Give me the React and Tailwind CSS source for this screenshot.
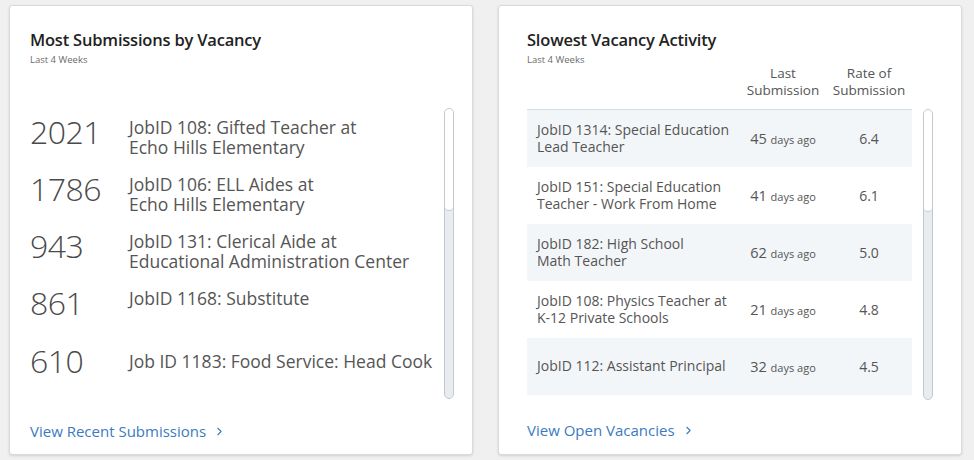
import { ChevronRight } from 'lucide-react'

const submissions = [
  { count: '2021', lines: ['JobID 108: Gifted Teacher at', 'Echo Hills Elementary'] },
  { count: '1786', lines: ['JobID 106: ELL Aides at', 'Echo Hills Elementary'] },
  { count: '943', lines: ['JobID 131: Clerical Aide at', 'Educational Administration Center'] },
  { count: '861', lines: ['JobID 1168: Substitute'] },
  { count: '610', lines: ['Job ID 1183: Food Service: Head Cook'], center: true },
]

const slowest = [
  { lines: ['JobID 1314: Special Education', 'Lead Teacher'], days: '45', rate: '6.4' },
  { lines: ['JobID 151: Special Education', 'Teacher - Work From Home'], days: '41', rate: '6.1' },
  { lines: ['JobID 182: High School', 'Math Teacher'], days: '62', rate: '5.0' },
  { lines: ['JobID 108: Physics Teacher at', 'K-12 Private Schools'], days: '21', rate: '4.8' },
  { lines: ['JobID 112: Assistant Principal'], days: '32', rate: '4.5' },
]

function Scrollbar() {
  return (
    <div className="w-[10px] h-[291px] rounded-full border border-[#c5c9cf] bg-[#e8ecf0] flex flex-col overflow-hidden">
      <div className="h-[102px] rounded-full bg-white border-b border-[#c5c9cf]" />
    </div>
  )
}

function CardHeader({ title }) {
  return (
    <div>
      <h2 className="text-[16.5px] leading-[22px] font-semibold text-[#222] tracking-[-0.2px]">{title}</h2>
      <p className="text-[9.5px] leading-[12px] text-[#6b6b6b] mt-[3px]">Last 4 Weeks</p>
    </div>
  )
}

function FooterLink({ label }) {
  return (
    <a href="#" className="flex items-center gap-[7px] text-[15px] text-[#3b7ac0]">
      {label}
      <ChevronRight className="h-[13px] w-[13px]" strokeWidth={2} />
    </a>
  )
}

export default function App() {
  return (
    <div
      className="w-[974px] h-[460px] bg-[#f0f0f0] flex gap-[25px] pl-[9px] pt-[5px]"
      style={{ fontFamily: '"Open Sans", "Noto Sans", sans-serif' }}
    >
      {/* Most Submissions */}
      <div className="w-[464px] h-[450px] bg-white border border-[#dadada] rounded-[3px] shadow-sm flex flex-col pl-[20px] pt-[23px] pr-[18px]">
        <CardHeader title="Most Submissions by Vacancy" />
        <div className="flex mt-[38px] h-[300px]">
          <div className="flex-1 flex flex-col">
            {submissions.map((s) => (
              <div key={s.count} className={`h-[57px] flex ${s.center ? 'items-center' : 'items-start pt-[9px]'}`}>
                <div className="w-[99px] text-[32px] leading-[38px] font-light text-[#4a4a4a] tracking-[-0.5px]">
                  {s.count}
                </div>
                <div className={`text-[17.5px] leading-[20px] text-[#555] ${s.center ? '' : 'pt-[4px]'}`}>
                  {s.lines.map((l) => (
                    <div key={l}>{l}</div>
                  ))}
                </div>
              </div>
            ))}
          </div>
          <div className="mt-[4px]">
            <Scrollbar />
          </div>
        </div>
        <div className="mt-[16px]">
          <FooterLink label="View Recent Submissions" />
        </div>
      </div>

      {/* Slowest Vacancy Activity */}
      <div className="w-[464px] h-[450px] bg-white border border-[#dadada] rounded-[3px] shadow-sm flex flex-col pl-[28px] pt-[23px] pr-[28px]">
        <CardHeader title="Slowest Vacancy Activity" />
        <div className="flex">
          <div className="w-[385px] flex text-[13.5px] leading-[17px] text-[#555] -mt-[1px]">
            <div className="w-[213px]" />
            <div className="w-[86px] text-center">Last<br />Submission</div>
            <div className="w-[86px] text-center">Rate of<br />Submission</div>
          </div>
        </div>
        <div className="flex gap-[11px] mt-[10px]">
          <div className="w-[385px] border-t border-[#d8dde3]">
            {slowest.map((r, i) => (
              <div
                key={r.lines[0]}
                className={`h-[57px] flex items-center text-[#555] ${i % 2 === 0 ? 'bg-[#f3f6f9]' : 'bg-white'}`}
              >
                <div className="w-[213px] pl-[10px] text-[14px] leading-[16.5px]">
                  {r.lines.map((l) => (
                    <div key={l}>{l}</div>
                  ))}
                </div>
                <div className="w-[86px] text-center text-[14.5px]">
                  {r.days} <span className="text-[11px]">days ago</span>
                </div>
                <div className="w-[86px] text-center text-[14px]">{r.rate}</div>
              </div>
            ))}
          </div>
          <Scrollbar />
        </div>
        <div className="mt-[19px]">
          <FooterLink label="View Open Vacancies" />
        </div>
      </div>
    </div>
  )
}
